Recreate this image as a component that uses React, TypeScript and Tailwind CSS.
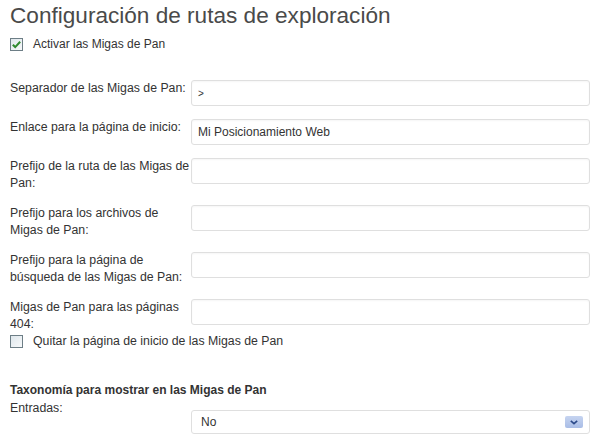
import React from "react";

const font = { fontFamily: '"Liberation Sans", Arial, sans-serif' };

function CheckBox({ checked }: { checked?: boolean }) {
  return (
    <span className="flex h-[13px] w-[13px] shrink-0 items-center justify-center border border-[#6d7e86] bg-gradient-to-br from-[#dfe7ec] to-[#f7f9fa]">
      {checked && (
        <svg viewBox="0 0 12 12" className="h-[11px] w-[11px]">
          <path d="M2 6.2 L4.6 8.8 L10 3" fill="none" stroke="#2f8a2f" strokeWidth="2.2" />
        </svg>
      )}
    </span>
  );
}

const fields: { label: string; value?: string; small?: boolean }[] = [
  { label: "Separador de las Migas de Pan:", value: ">", small: true },
  { label: "Enlace para la página de inicio:", value: "Mi Posicionamiento Web" },
  { label: "Prefijo de la ruta de las Migas de Pan:" },
  { label: "Prefijo para los archivos de Migas de Pan:" },
  { label: "Prefijo para la página de búsqueda de las Migas de Pan:" },
  { label: "Migas de Pan para las páginas 404:" },
];

export default function App() {
  return (
    <div className="min-h-screen bg-white pl-[10px] text-[12.3px] text-[#333]" style={font}>
      <h2 className="pt-[3px] text-[22.6px] leading-[26px] text-[#4a4a4a]">
        Configuración de rutas de exploración
      </h2>

      <label className="mt-[7px] flex items-center gap-[10px] text-[12px] leading-[17px]">
        <CheckBox checked />
        <span>Activar las Migas de Pan</span>
      </label>

      <div className="mt-[27px] flex flex-col gap-[13px]">
        {fields.map((f) => (
          <div key={f.label} className="flex items-start">
            <div className="w-[181px] shrink-0 leading-[17px]">{f.label}</div>
            <div className="flex h-[26px] w-[399px] items-center rounded-[3px] border border-[#dfdfdf] bg-white px-[6px] shadow-[inset_0_1px_2px_rgba(0,0,0,0.04)]">
              <span className={f.small ? "text-[10px]" : "text-[12px]"}>{f.value}</span>
            </div>
          </div>
        ))}
      </div>

      <label className="flex items-center gap-[10px] leading-[17px]">
        <CheckBox />
        <span>Quitar la página de inicio de las Migas de Pan</span>
      </label>

      <h3 className="mt-[32px] text-[12px] font-bold leading-[17px]">
        Taxonomía para mostrar en las Migas de Pan
      </h3>

      <div className="mt-[1px] flex items-start">
        <div className="w-[181px] shrink-0 leading-[17px]">Entradas:</div>
        <div className="mt-[10px] flex h-[24px] w-[399px] items-center justify-between rounded-[3px] border border-[#dfdfdf] bg-white pl-[9px] pr-[6px]">
          <span className="text-[12px]">No</span>
          <span className="flex h-[12px] w-[18px] items-center justify-center rounded-[2px] bg-gradient-to-b from-[#c6d4f0] to-[#a9bde6]">
            <svg viewBox="0 0 10 6" className="h-[5px] w-[8px]">
              <path d="M1 1 L5 4.5 L9 1" fill="none" stroke="#2c4a8a" strokeWidth="2" />
            </svg>
          </span>
        </div>
      </div>
    </div>
  );
}
